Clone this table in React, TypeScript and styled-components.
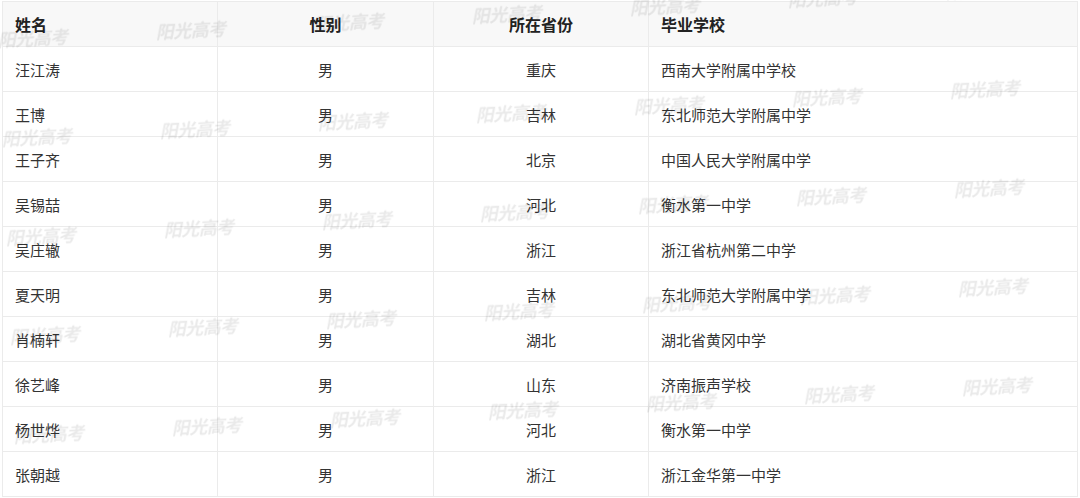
import React from "react";
import styled, { createGlobalStyle } from "styled-components";

const GlobalStyle = createGlobalStyle`
  html, body {
    margin: 0;
    padding: 0;
    background: #ffffff;
  }
  body {
    font-family: "Noto Sans CJK SC", "Noto Sans", sans-serif;
    color: #333333;
  }
`;

const Page = styled.div`
  position: relative;
  width: 1080px;
  height: 498px;
  overflow: hidden;
  padding: 1px 0 0 2px;
  box-sizing: border-box;
`;

const Table = styled.table`
  width: 1075px;
  table-layout: fixed;
  border-collapse: collapse;
  border: 1px solid #ebebeb;
`;

const HeadRow = styled.tr`
  height: 45px;
  background: #f8f8f8;
`;

const Row = styled.tr`
  height: 45px;
  background: #ffffff;
`;

const HeadCell = styled.th<{ $align: "left" | "center" }>`
  border: 1px solid #ebebeb;
  padding: 0 12px;
  font-size: 16px;
  font-weight: 700;
  color: #222222;
  text-align: ${(p) => p.$align};
  vertical-align: middle;
`;

const Cell = styled.td<{ $align: "left" | "center" }>`
  border: 1px solid #ebebeb;
  padding: 0 12px;
  font-size: 15px;
  font-weight: 400;
  color: #333333;
  text-align: ${(p) => p.$align};
  vertical-align: middle;
  white-space: nowrap;
`;

const WatermarkLayer = styled.div`
  position: absolute;
  inset: 0;
  pointer-events: none;
  overflow: hidden;
`;

const Mark = styled.span`
  position: absolute;
  font-family: "Noto Sans CJK SC", sans-serif;
  font-size: 18px;
  font-weight: 700;
  font-style: italic;
  line-height: 20px;
  letter-spacing: -0.5px;
  color: rgba(0, 0, 0, 0.085);
  transform: rotate(-3deg);
  transform-origin: left top;
  white-space: nowrap;
  filter: blur(0.3px);
`;

const columns: { title: string; width: number; align: "left" | "center" }[] = [
  { title: "姓名", width: 215, align: "left" },
  { title: "性别", width: 216, align: "center" },
  { title: "所在省份", width: 215, align: "center" },
  { title: "毕业学校", width: 429, align: "left" },
];

const rows: [string, string, string, string][] = [
  ["汪江涛", "男", "重庆", "西南大学附属中学校"],
  ["王博", "男", "吉林", "东北师范大学附属中学"],
  ["王子齐", "男", "北京", "中国人民大学附属中学"],
  ["吴锡喆", "男", "河北", "衡水第一中学"],
  ["吴庄辙", "男", "浙江", "浙江省杭州第二中学"],
  ["夏天明", "男", "吉林", "东北师范大学附属中学"],
  ["肖楠轩", "男", "湖北", "湖北省黄冈中学"],
  ["徐艺峰", "男", "山东", "济南振声学校"],
  ["杨世烨", "男", "河北", "衡水第一中学"],
  ["张朝越", "男", "浙江", "浙江金华第一中学"],
];

const marks: { x: number; y: number }[] = [];
for (let r = 0; r < 5; r++) {
  for (let c = 0; c < 7; c++) {
    marks.push({ x: -3 + c * 158 + r * 4, y: 29 + r * 99 - c * 8 });
  }
}

export default function App() {
  return (
    <>
      <GlobalStyle />
      <Page>
        <Table>
          <colgroup>
            {columns.map((c) => (
              <col key={c.title} style={{ width: c.width }} />
            ))}
          </colgroup>
          <thead>
            <HeadRow>
              {columns.map((c) => (
                <HeadCell key={c.title} $align={c.align}>
                  {c.title}
                </HeadCell>
              ))}
            </HeadRow>
          </thead>
          <tbody>
            {rows.map((r, i) => (
              <Row key={i}>
                {r.map((v, j) => (
                  <Cell key={j} $align={columns[j].align}>
                    {v}
                  </Cell>
                ))}
              </Row>
            ))}
          </tbody>
        </Table>
        <WatermarkLayer>
          {marks.map((m, i) => (
            <Mark key={i} style={{ left: m.x, top: m.y }}>
              阳光高考
            </Mark>
          ))}
        </WatermarkLayer>
      </Page>
    </>
  );
}
